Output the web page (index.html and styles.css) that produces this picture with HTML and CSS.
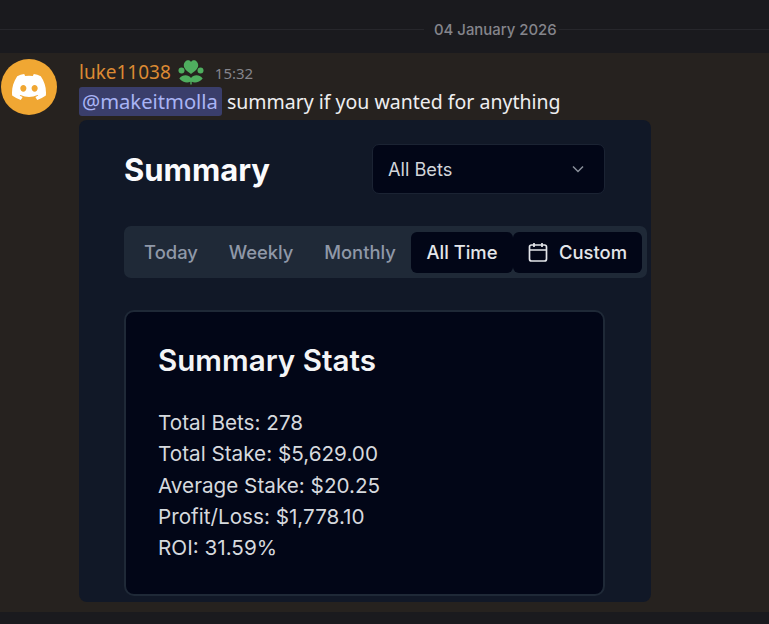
FILE: index.html
```html
<!DOCTYPE html>
<html lang="en">
<head>
<meta charset="utf-8">
<title>Message</title>
<link rel="stylesheet" href="styles.css">
</head>
<body>
<header class="date-bar">
  <span class="rule rule-left"></span>
  <span class="date">04 January 2026</span>
  <span class="rule rule-right"></span>
</header>
<main class="message">
  <div class="avatar">
    <svg class="avatar-logo" viewBox="0 0 127.14 96.36" aria-hidden="true"><path fill="#fff" d="M107.7 8.07A105.15 105.15 0 0 0 81.47 0a72.06 72.06 0 0 0-3.36 6.83 97.68 97.68 0 0 0-29.11 0A72.37 72.37 0 0 0 45.64 0a105.89 105.89 0 0 0-26.25 8.09C2.79 32.65-1.71 56.6.54 80.21a105.73 105.73 0 0 0 32.17 16.15 77.7 77.7 0 0 0 6.89-11.11 68.42 68.42 0 0 1-10.85-5.18c.91-.66 1.8-1.34 2.66-2a75.57 75.57 0 0 0 64.32 0c.87.71 1.76 1.39 2.66 2a68.68 68.68 0 0 1-10.87 5.19 77 77 0 0 0 6.89 11.1 105.25 105.25 0 0 0 32.19-16.14c2.64-27.38-4.51-51.11-18.9-72.15ZM42.45 65.69C36.18 65.69 31 60 31 53s5-12.74 11.43-12.74S54 46 53.89 53s-5.05 12.69-11.44 12.69Zm42.24 0C78.41 65.69 73.25 60 73.25 53s5-12.74 11.44-12.74S96.23 46 96.12 53s-5.04 12.69-11.43 12.69Z"/></svg>
  </div>
  <div class="content">
    <div class="meta">
      <span class="name">luke11038</span>
      <svg class="badge" viewBox="0 0 26 26" aria-hidden="true">
        <path fill="#4fae5f" d="M13 15C8.500 12 5.800 9.500 5.800 6.300 5.800 3.400 8 1.300 10.200 1.300c1.200 0 2.200.6 2.800 1.700.6-1.100 1.600-1.700 2.800-1.700 2.200 0 4.400 2.100 4.400 5 0 3.200-2.700 5.700-7.200 8.700Z"/>
        <path fill="#4fae5f" d="M12.300 25.500v-2.700C10 24 4.500 24 1.300 19.500 4.500 15.300 10.300 15.300 13 19c2.700-3.700 8.500-3.700 11.700.5-3.200 4.500-8.700 4.500-11 3.300v2.700Z"/>
        <circle fill="#4fae5f" cx="3.500" cy="11.500" r="3"/>
        <circle fill="#4fae5f" cx="22.500" cy="11.500" r="3"/>
      </svg>
      <span class="time">15:32</span>
    </div>
    <p class="text"><span class="mention">@makeitmolla</span> summary if you wanted for anything</p>
    <section class="shot">
      <div class="shot-head">
        <h1 class="shot-title">Summary</h1>
        <div class="select">
          <span>All Bets</span>
          <svg class="chevron" viewBox="0 0 16 16" aria-hidden="true"><path d="m3 5.500 5 5 5-5"/></svg>
        </div>
      </div>
      <nav class="tabs">
        <span class="tab tab-today">Today</span>
        <span class="tab tab-weekly">Weekly</span>
        <span class="tab tab-monthly">Monthly</span>
        <span class="tab tab-active tab-all">All Time</span>
        <span class="tab tab-active tab-custom">
          <svg class="calendar" viewBox="0 0 20 20" aria-hidden="true"><rect x="1.500" y="3" width="17" height="16" rx="2"/><path d="M1.500 8h17M6 1v4M14 1v4"/></svg>
          Custom
        </span>
      </nav>
      <article class="card">
        <h2 class="card-title">Summary Stats</h2>
        <ul class="stats">
          <li>Total Bets: 278</li>
          <li>Total Stake: $5,629.00</li>
          <li>Average Stake: $20.25</li>
          <li>Profit/Loss: $1,778.10</li>
          <li>ROI: 31.59%</li>
        </ul>
      </article>
    </section>
  </div>
</main>
<footer class="bottom"></footer>
</body>
</html>
```
FILE: styles.css
```css
* { box-sizing: border-box; }
html, body { margin: 0; height: 100%; }
body {
  width: 769px;
  height: 624px;
  overflow: hidden;
  background: #1a1a1e;
  font-family: "Noto Sans", sans-serif;
  display: flex;
  flex-direction: column;
}
.date-bar {
  height: 53px;
  flex: none;
  display: flex;
  align-items: center;
  padding-top: 6px;
}
.rule { height: 1px; background: #27272c; }
.rule-left { width: 424px; }
.rule-right { flex: 1; }
.date {
  font-family: "Inter", sans-serif;
  font-size: 14.900px;
  font-weight: 500;
  color: #85858c;
  white-space: nowrap;
  padding: 0 2px 0 10px;
}
.message {
  height: 559px;
  flex: none;
  background: #26221f;
  display: flex;
  padding: 6px 0 0 1px;
  gap: 22px;
}
.avatar {
  width: 56px;
  height: 56px;
  flex: none;
  border-radius: 50%;
  background: #f0a733;
  display: flex;
  align-items: center;
  justify-content: center;
}
.avatar-logo { width: 34px; height: 26px; }
.content { width: 572px; flex: none; }
.meta {
  height: 25px;
  display: flex;
  align-items: center;
}
.name {
  font-size: 19px;
  font-weight: 400;
  color: #dc8a33;
  line-height: 26px;
}
.badge { width: 26px; height: 26px; margin-left: 7px; flex: none; }
.time {
  margin-left: 11px;
  font-size: 15px;
  color: #85858c;
  padding-top: 3px;
}
.text {
  margin: 3px 0 0;
  height: 29px;
  line-height: 29px;
  font-size: 19.500px;
  color: #eeeef0;
  white-space: nowrap;
}
.mention {
  display: inline-block;
  font-size: 20.200px;
  background: #3a3e6b;
  color: #a9b4f5;
  border-radius: 3px;
  padding: 0 4px 0 3px;
}
.shot {
  margin-top: 4px;
  width: 572px;
  height: 482px;
  background: #111827;
  border-radius: 8px;
  padding: 24px 0 0 45px;
  font-family: "Inter", sans-serif;
}
.shot-head {
  display: flex;
  align-items: center;
  width: 481px;
  height: 50px;
  justify-content: space-between;
}
.shot-title {
  margin: 0;
  font-size: 31px;
  font-weight: 700;
  color: #fbfbfd;
}
.select {
  width: 233px;
  height: 50px;
  background: #020617;
  border: 1px solid #1b2333;
  border-radius: 7px;
  padding: 0 18px 0 15px;
  display: flex;
  align-items: center;
  justify-content: space-between;
  font-size: 18.200px;
  color: #d2d5da;
}
.chevron {
  width: 16px;
  height: 16px;
  fill: none;
  stroke: #8a909b;
  stroke-width: 1.500;
}
.tabs {
  margin-top: 32px;
  width: 523px;
  height: 52px;
  background: #1f2937;
  border-radius: 7px;
  padding: 6px 5px;
  display: flex;
  align-items: center;
  font-size: 18.400px;
  font-weight: 500;
  color: #8f98a8;
}
.tab {
  height: 41px;
  display: flex;
  align-items: center;
  justify-content: center;
  white-space: nowrap;
}
.tab-today { width: 84px; }
.tab-weekly { width: 96px; }
.tab-monthly { width: 102px; }
.tab-active {
  background: #020617;
  color: #e4e6ea;
  border-radius: 6px;
}
.tab-all { width: 102px; }
.tab-custom { width: 129px; gap: 11px; }
.calendar {
  width: 20px;
  height: 20px;
  fill: none;
  stroke: #e4e6ea;
  stroke-width: 1.700;
}
.card {
  margin-top: 32px;
  width: 481px;
  height: 286px;
  background: #020617;
  border: 2px solid #1f2937;
  border-radius: 10px;
  padding: 30px 0 0 32px;
}
.card-title {
  margin: 0;
  font-size: 29.600px;
  line-height: 36px;
  font-weight: 600;
  color: #f3f4f6;
}
.stats {
  list-style: none;
  margin: 29px 0 0;
  padding: 0;
  font-size: 20.700px;
  line-height: 31.300px;
  color: #d6d9de;
}
.bottom { flex: 1; background: #1a1a1e; }
```
